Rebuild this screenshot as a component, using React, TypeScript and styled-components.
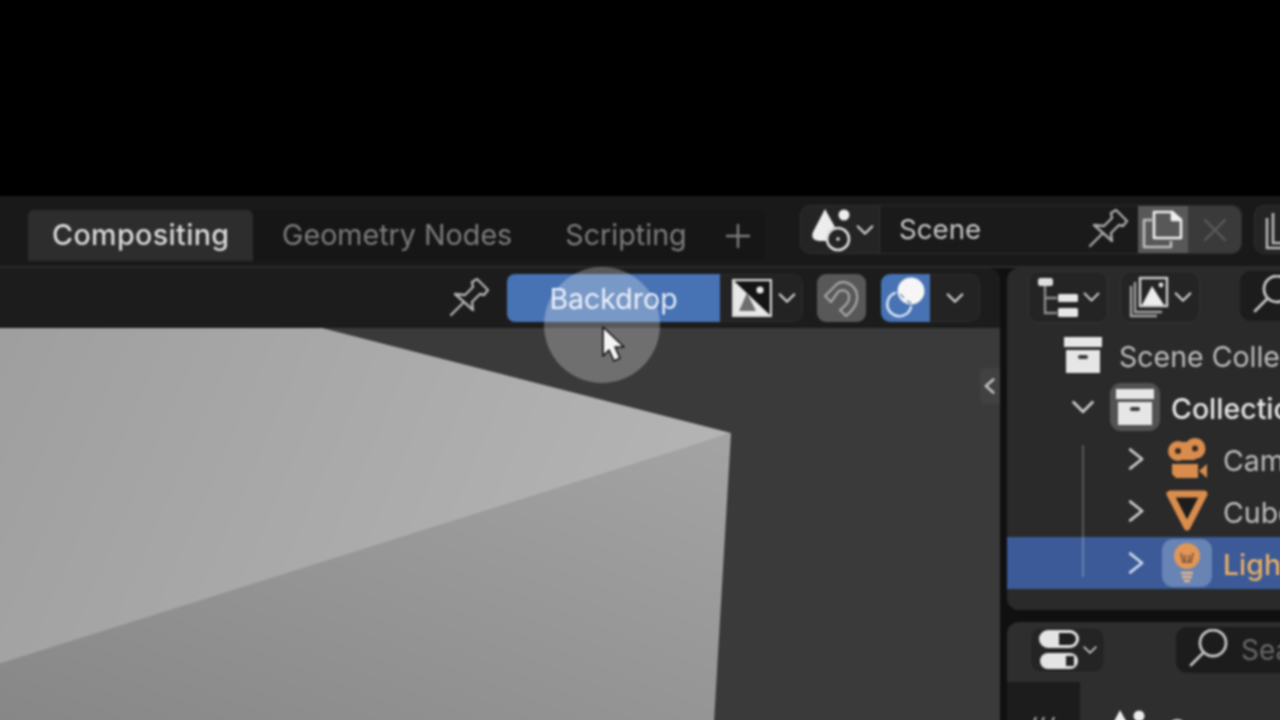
import React from 'react'
import styled, { createGlobalStyle } from 'styled-components'

const GlobalStyle = createGlobalStyle`
  html, body {
    margin: 0;
    padding: 0;
    background: #000;
  }
  * {
    box-sizing: border-box;
  }
`

const Frame = styled.div`
  width: 1280px;
  height: 720px;
  overflow: hidden;
  background: #000;
`

// 2px bigger on every side so the soft video blur does not fade at the frame edges
const Screen = styled.div`
  position: relative;
  width: 1284px;
  height: 724px;
  margin: -2px;
  padding-top: 198px;
  display: flex;
  flex-direction: column;
  overflow: hidden;
  background: #000;
  font-family: Inter, 'Liberation Sans', sans-serif;
  font-size: 28.7px;
  white-space: nowrap;
  filter: blur(0.8px);
`

const TopBar = styled.header`
  height: 72px;
  flex-shrink: 0;
  display: flex;
  align-items: flex-start;
  padding: 9px 0 0 30px;
  background: #191919;
  border-bottom: 2px solid #2b2b2b;
`

const TabStrip = styled.nav`
  width: 737px;
  height: 51px;
  margin-top: 5px;
  flex-shrink: 0;
  display: flex;
  gap: 5px;
  background: #161616;
  border-radius: 6px 6px 0 0;
`

const Tab = styled.div<{ $active?: boolean }>`
  width: ${props => (props.$active ? '225px' : 'auto')};
  height: 100%;
  padding: 0 24px 2px;
  display: flex;
  align-items: center;
  border-radius: 6px 6px 0 0;
  background: ${props => (props.$active ? '#2d2d2d' : 'transparent')};
  color: ${props => (props.$active ? '#d8d8d8' : '#7c7c7c')};
  font-weight: ${props => (props.$active ? 500 : 400)};
  letter-spacing: ${props => (props.$active ? '0.35px' : '0')};
`

const PlusButton = styled.div`
  width: 44px;
  display: flex;
  align-items: center;
  justify-content: center;
`

const SceneGroup = styled.div<{ $width: number; $gap: number }>`
  width: ${props => props.$width}px;
  height: 49px;
  margin-left: ${props => props.$gap}px;
  flex-shrink: 0;
  display: flex;
  overflow: hidden;
  border: 1px solid #2e2e2e;
  border-radius: 10px;
  background: #242424;
`

const SceneIconSlot = styled.div`
  width: 79px;
  flex-shrink: 0;
  display: flex;
  align-items: center;
  padding-left: 10px;
  border-right: 1px solid #333;
`

const SceneField = styled.div`
  flex: 1;
  display: flex;
  align-items: center;
  justify-content: space-between;
  padding: 0 9px 2px 19px;
  background: #1a1a1a;
  color: #c6c6c6;
  font-size: 27.7px;
`

const SceneAction = styled.div<{ $bg: string }>`
  width: ${props => (props.$bg === '#585858' ? 50 : 53)}px;
  flex-shrink: 0;
  display: flex;
  align-items: center;
  justify-content: center;
  background: ${props => props.$bg};
`

const Workspace = styled.div`
  flex: 1;
  min-height: 0;
  display: flex;
  gap: 7px;
  background: #101010;
`

const NodeEditor = styled.section`
  width: 1002px;
  flex-shrink: 0;
  display: flex;
  flex-direction: column;
  overflow: hidden;
  border-top-right-radius: 12px;
`

const EditorHeader = styled.div`
  height: 60px;
  flex-shrink: 0;
  display: flex;
  align-items: center;
  justify-content: flex-end;
  padding-right: 20px;
  background: #1c1c1c;
`

const PinSlot = styled.div`
  margin-right: 17px;
  display: flex;
`

const BackdropToggle = styled.div`
  width: 213px;
  height: 48px;
  display: flex;
  align-items: center;
  justify-content: center;
  border-radius: 8px 0 0 8px;
  background: #4772b3;
  color: #e4ecf7;
  font-size: 28.5px;
`

const DropdownButton = styled.div<{ $width: number; $flat?: boolean }>`
  width: ${props => props.$width}px;
  height: 48px;
  display: flex;
  align-items: center;
  gap: 5px;
  padding-left: ${props => (props.$flat ? 15 : 12)}px;
  border: 1px solid #2c2c2c;
  border-left: none;
  border-radius: 0 10px 10px 0;
  background: #232323;
`

const SnapButton = styled.div`
  width: 49px;
  height: 48px;
  margin-left: 14px;
  margin-right: 15px;
  display: flex;
  border-radius: 9px;
  background: #585858;
`

const OverlayButton = styled.div`
  width: 49px;
  height: 48px;
  display: flex;
  border-radius: 9px 0 0 9px;
  background: #4772b3;
`

const Viewport = styled.div`
  position: relative;
  flex: 1;
  background: #3a3a3a;
`

const CubeCanvas = styled.svg`
  position: absolute;
  inset: 0;
  width: 100%;
  height: 100%;
`

const SidebarTab = styled.div`
  position: absolute;
  top: 40px;
  right: 0;
  width: 20px;
  height: 36px;
  display: flex;
  align-items: center;
  justify-content: center;
  background: #414141;
  border-radius: 5px 0 0 5px;
`

const SideColumn = styled.div`
  flex: 1;
  min-width: 0;
  display: flex;
  flex-direction: column;
  gap: 12px;
`

const OutlinerPanel = styled.section`
  position: relative;
  height: 342px;
  flex-shrink: 0;
  overflow: hidden;
  border-radius: 12px 0 0 12px;
  background: #2a2a2a;
`

const PanelHeader = styled.div<{ $height: number; $top: number }>`
  height: ${props => props.$height}px;
  padding-top: ${props => props.$top}px;
  display: flex;
  align-items: flex-start;
`

const HeaderDropdown = styled.div<{ $left: number; $height: number }>`
  width: ${props => (props.$height === 46 ? 75 : 80)}px;
  height: ${props => props.$height}px;
  margin-left: ${props => props.$left}px;
  flex-shrink: 0;
  display: flex;
  align-items: center;
  justify-content: flex-end;
  gap: 3px;
  padding-right: 6px;
  border: 1px solid #333;
  border-radius: 11px;
  background: #242424;
`

const IconPush = styled.div`
  margin-right: auto;
  padding-left: 8px;
  display: flex;
`

const SearchBox = styled.div<{ $left: number; $height: number }>`
  width: 200px;
  height: ${props => props.$height}px;
  margin-left: ${props => props.$left}px;
  flex-shrink: 0;
  display: flex;
  align-items: center;
  gap: 11px;
  padding-left: 12px;
  border-radius: 11px 0 0 11px;
  background: #1c1c1c;
  color: #686868;
  font-size: 28px;
`

const TreeList = styled.div`
  padding-top: 1px;
`

const TreeRow = styled.div<{ $depth: number; $selected?: boolean }>`
  height: 52px;
  padding-left: ${props => 50 + props.$depth * 52}px;
  display: flex;
  align-items: center;
  background: ${props => (props.$selected ? '#3b5a97' : 'transparent')};
`

const ExpandSlot = styled.div`
  width: 52px;
  flex-shrink: 0;
  display: flex;
  justify-content: center;
`

const IconSlot = styled.div<{ $highlight?: string }>`
  width: 50px;
  height: 48px;
  margin: 0 1px;
  flex-shrink: 0;
  display: flex;
  align-items: center;
  justify-content: center;
  border-radius: 11px;
  background: ${props => props.$highlight || 'transparent'};
`

const TreeLabel = styled.span<{ $color: string; $strong?: boolean }>`
  margin-left: 10px;
  padding-top: 3px;
  color: ${props => props.$color};
  font-weight: ${props => (props.$strong ? 500 : 400)};
  font-size: 28.5px;
`

const TreeGuide = styled.div`
  position: absolute;
  top: 177px;
  left: 75px;
  width: 2px;
  height: 132px;
  background: rgba(255, 255, 255, 0.22);
`

const PropertiesPanel = styled.section`
  flex: 1;
  min-height: 0;
  overflow: hidden;
  border-radius: 12px 0 0 0;
  background: #2e2e2e;
`

const PropertiesBody = styled.div`
  display: flex;
  height: 100px;
`

const PropertyTabs = styled.div`
  width: 73px;
  flex-shrink: 0;
  display: flex;
  justify-content: center;
  padding-top: 34px;
  background: #1c1c1c;
`

const PropertyTitle = styled.div`
  display: flex;
  align-items: flex-start;
  gap: 18px;
  padding: 26px 0 0 26px;
  color: #c4c4c4;
  font-size: 28.5px;
`

const PropertyName = styled.span`
  margin-top: 4px;
`

const ClickHalo = styled.div`
  position: absolute;
  top: 269px;
  left: 546px;
  width: 116px;
  height: 116px;
  border-radius: 50%;
  background: rgba(255, 255, 255, 0.27);
`

const Cursor = styled.svg`
  position: absolute;
  top: 328px;
  left: 604px;
`

const Chevron = ({
  dir = 'down',
  color = '#c8c8c8',
  size = 22,
  weight = 2.4,
}: {
  dir?: 'down' | 'right' | 'left'
  color?: string
  size?: number
  weight?: number
}) => {
  const points = dir === 'down' ? '3,7 11,15 19,7' : dir === 'right' ? '7,3 17,11 7,19' : '15,3 6,11 15,19'
  return (
    <svg width={size} height={size} viewBox="0 0 22 22" fill="none">
      <polyline points={points} stroke={color} strokeWidth={weight} strokeLinecap="round" strokeLinejoin="round" />
    </svg>
  )
}

const PinIcon = ({ color = '#b0b0b0' }: { color?: string }) => (
  <svg width="40" height="40" viewBox="0 0 40 40" fill="none" stroke={color} strokeWidth="2.4" strokeLinejoin="round" strokeLinecap="round">
    <path d="M5 16 L15 17 L23 9 L22 4 L27 1 L38 12 L34 17 L30 16 L22 24 L23 32 Z" />
    <path d="M13 25 L1 37" />
  </svg>
)

const PlusIcon = () => (
  <svg width="26" height="26" viewBox="0 0 26 26" stroke="#7c7c7c" strokeWidth="2.4" strokeLinecap="round">
    <path d="M13 2 V24 M2 13 H24" />
  </svg>
)

const SceneIcon = () => (
  <svg width="44" height="46" viewBox="0 0 44 46" fill="none">
    <path d="M14 2 L2 25 Q-1 33 8 34 L16 34 Q14 24 24 20 Z" fill="#ededed" />
    <circle cx="33" cy="8" r="5.5" fill="#ededed" />
    <circle cx="27" cy="32" r="11" stroke="#dedede" strokeWidth="2.6" />
    <circle cx="27" cy="32" r="1.8" fill="#dedede" />
  </svg>
)

const DuplicateIcon = () => (
  <svg width="44" height="42" viewBox="0 0 44 42" fill="none" strokeWidth="2.6" strokeLinejoin="round">
    <path d="M13 3 H31 L40 11 V29 H13 Z" stroke="#efefef" fill="#585858" />
    <path d="M31 3 V11 H40 Z" fill="#efefef" stroke="#efefef" />
    <path d="M11 11 H3 V38 H30 V32" stroke="#bdbdbd" />
  </svg>
)

const CloseIcon = () => (
  <svg width="26" height="26" viewBox="0 0 26 26" stroke="#5a5a5a" strokeWidth="2.4" strokeLinecap="round">
    <path d="M3 3 L23 23 M23 3 L3 23" />
  </svg>
)

const StackBackIcon = () => (
  <svg width="34" height="40" viewBox="0 0 34 40" fill="none" stroke="#b8b8b8" strokeWidth="2.6">
    <path d="M2 8 V38 H26 M8 3 V33 H30" />
  </svg>
)

const BackdropImageIcon = () => (
  <svg width="40" height="38" viewBox="0 0 40 38">
    <rect x="1" y="1" width="38" height="36" fill="#141414" />
    <path d="M1 1 L39 37 H1 Z" fill="#e8e8e8" />
    <path d="M7 32 L15 14 L24 32 Z" fill="#6e6e6e" />
    <circle cx="28" cy="11" r="3.6" fill="#e8e8e8" />
    <rect x="1" y="1" width="38" height="36" fill="none" stroke="#d8d8d8" strokeWidth="2.4" />
  </svg>
)

const MagnetIcon = () => (
  <svg width="49" height="48" viewBox="0 0 49 48" fill="none" stroke="#a2a2a2" strokeWidth="2.4" strokeLinejoin="round">
    <path d="M8 22 L20 10 C30 4 42 14 40 26 C39 32 34 38 29 42 L23 36 C28 32 33 28 32 22 C31 16 25 15 21 18 L14 28 Z" />
  </svg>
)

const OverlayIcon = () => (
  <svg width="49" height="48" viewBox="0 0 49 48" fill="none">
    <path d="M14 19 A12 12 0 1 0 30 33" stroke="#d6e2f4" strokeWidth="2.6" strokeLinecap="round" />
    <circle cx="30" cy="17" r="13.5" fill="#f6f6f6" />
    <path d="M19 20 L23 24 M26 27 L30 29" stroke="#6a85ad" strokeWidth="1.4" />
  </svg>
)

const OutlinerModeIcon = () => (
  <svg width="42" height="42" viewBox="0 0 42 42" fill="none">
    <rect x="1" y="2" width="15" height="8" rx="2.5" fill="#dedede" />
    <path d="M8 10 V37 H20 M8 22 H20" stroke="#8e8e8e" strokeWidth="2.4" />
    <rect x="21" y="18" width="20" height="8" rx="1.5" fill="#e6e6e6" />
    <rect x="21" y="32" width="20" height="9" rx="1.5" fill="#e6e6e6" />
  </svg>
)

const DisplayModeIcon = () => (
  <svg width="40" height="42" viewBox="0 0 40 42" fill="none">
    <path d="M2 10 V40 H28 M6 6 V36 H33" stroke="#a2a2a2" strokeWidth="2.4" />
    <rect x="11" y="2" width="27" height="28" fill="#242424" stroke="#d0d0d0" strokeWidth="2.4" />
    <path d="M13 29 L23 10 L35 29 Z" fill="#ededed" />
    <circle cx="32" cy="9" r="2.4" fill="#dedede" />
  </svg>
)

const SearchIcon = () => (
  <svg width="42" height="42" viewBox="0 0 42 42" fill="none" stroke="#c4c4c4" strokeWidth="2.8" strokeLinecap="round">
    <circle cx="25" cy="14" r="13" />
    <path d="M15 24 L3 36" />
  </svg>
)

const TogglesIcon = () => (
  <svg width="40" height="40" viewBox="0 0 40 40" fill="none">
    <rect x="1.5" y="1.5" width="37" height="15" rx="7.5" fill="#1f1f1f" stroke="#e4e4e4" strokeWidth="3" />
    <path d="M9 1 H20 V17 H9 A8 8 0 0 1 9 1 Z" fill="#e4e4e4" />
    <rect x="1" y="23" width="38" height="16" rx="8" fill="#e4e4e4" />
    <rect x="27" y="26" width="8" height="10" fill="#242424" />
  </svg>
)

const BoxIcon = () => (
  <svg width="40" height="38" viewBox="0 0 40 38">
    <rect x="1" y="1" width="38" height="10" fill="#e6e6e6" />
    <rect x="3" y="14" width="34" height="23" fill="#e6e6e6" />
    <rect x="15" y="19" width="10" height="4" rx="2" fill="#3a3a3a" />
  </svg>
)

const CameraIcon = () => (
  <svg width="44" height="42" viewBox="0 0 44 42">
    <path d="M13 4 H30 V22 H13 Z" fill="#d98c4c" />
    <circle cx="13" cy="13" r="10" fill="#d98c4c" />
    <circle cx="30" cy="10.5" r="10.5" fill="#d98c4c" />
    <circle cx="13" cy="13" r="3" fill="#3a2a1e" />
    <circle cx="30" cy="10.5" r="3" fill="#3a2a1e" />
    <path d="M7 26 H33 V40 H11 L7 36 Z" fill="#d98c4c" />
    <path d="M34 33 L42 26 V40 Z" fill="#d98c4c" />
  </svg>
)

const CubeIcon = () => (
  <svg width="44" height="42" viewBox="0 0 44 42" fill="none">
    <path d="M5 4 H39 L22 37 Z" stroke="#d98c4c" strokeWidth="7" strokeLinejoin="round" fill="#1c1c1c" />
  </svg>
)

const BulbIcon = () => (
  <svg width="32" height="44" viewBox="0 0 32 44" fill="none">
    <circle cx="16" cy="15" r="13" fill="#e09656" />
    <path d="M10 12 L12 21 H20 L22 12 M14 14 V21 M18 14 V21" stroke="#8a5e3e" strokeWidth="2" />
    <path d="M10 32 H22 M11 36 H21 M13 40 H19" stroke="#e3b68e" strokeWidth="2.4" />
  </svg>
)

const ToolHint = () => (
  <svg width="24" height="6" viewBox="0 0 24 6" stroke="#b4b4b4" strokeWidth="2">
    <path d="M2 6 L4 1 M10 6 L12 1 M20 6 L22 1" />
  </svg>
)

const App = () => {
  return (
    <Frame>
      <GlobalStyle />
      <Screen>
        <TopBar>
          <TabStrip>
            <Tab $active>Compositing</Tab>
            <Tab>Geometry Nodes</Tab>
            <Tab>Scripting</Tab>
            <PlusButton>
              <PlusIcon />
            </PlusButton>
          </TabStrip>
          <SceneGroup $width={442} $gap={35}>
            <SceneIconSlot>
              <SceneIcon />
              <Chevron size={20} />
            </SceneIconSlot>
            <SceneField>
              Scene
              <PinIcon color="#a8a8a8" />
            </SceneField>
            <SceneAction $bg="#585858">
              <DuplicateIcon />
            </SceneAction>
            <SceneAction $bg="#3a3a3a">
              <CloseIcon />
            </SceneAction>
          </SceneGroup>
          <SceneGroup $width={120} $gap={12}>
            <SceneIconSlot>
              <StackBackIcon />
            </SceneIconSlot>
          </SceneGroup>
        </TopBar>
        <Workspace>
          <NodeEditor>
            <EditorHeader>
              <PinSlot>
                <PinIcon />
              </PinSlot>
              <BackdropToggle>Backdrop</BackdropToggle>
              <DropdownButton $width={83}>
                <BackdropImageIcon />
                <Chevron size={20} />
              </DropdownButton>
              <SnapButton>
                <MagnetIcon />
              </SnapButton>
              <OverlayButton>
                <OverlayIcon />
              </OverlayButton>
              <DropdownButton $width={50} $flat>
                <Chevron size={20} />
              </DropdownButton>
            </EditorHeader>
            <Viewport>
              <CubeCanvas viewBox="-2 0 1002 394" preserveAspectRatio="none">
                <defs>
                  <linearGradient id="cubeTop" x1="0" y1="0" x2="1" y2="0.2">
                    <stop offset="0" stopColor="#9f9f9f" />
                    <stop offset="1" stopColor="#b4b4b4" />
                  </linearGradient>
                  <linearGradient id="cubeFront" x1="0" y1="1" x2="1" y2="0">
                    <stop offset="0" stopColor="#878787" />
                    <stop offset="1" stopColor="#a4a4a4" />
                  </linearGradient>
                </defs>
                <polygon points="-2,320 731,105 714,394 -2,394" fill="url(#cubeFront)" />
                <polygon points="-2,0 322,0 731,105 -2,336" fill="url(#cubeTop)" />
              </CubeCanvas>
              <SidebarTab>
                <Chevron dir="left" size={18} color="#bdbdbd" weight={3.4} />
              </SidebarTab>
            </Viewport>
          </NodeEditor>
          <SideColumn>
            <OutlinerPanel>
              <PanelHeader $height={60} $top={3}>
                <HeaderDropdown $left={21} $height={52}>
                  <IconPush>
                    <OutlinerModeIcon />
                  </IconPush>
                  <Chevron size={20} />
                </HeaderDropdown>
                <HeaderDropdown $left={12} $height={52}>
                  <IconPush>
                    <DisplayModeIcon />
                  </IconPush>
                  <Chevron size={20} />
                </HeaderDropdown>
                <SearchBox $left={40} $height={50}>
                  <SearchIcon />
                </SearchBox>
              </PanelHeader>
              <TreeList>
                <TreeRow $depth={0}>
                  <ExpandSlot>
                    <BoxIcon />
                  </ExpandSlot>
                  <TreeLabel $color="#bdbdbd">Scene Collection</TreeLabel>
                </TreeRow>
                <TreeRow $depth={0}>
                  <ExpandSlot>
                    <Chevron size={26} />
                  </ExpandSlot>
                  <IconSlot $highlight="#525252">
                    <BoxIcon />
                  </IconSlot>
                  <TreeLabel $color="#e6e6e6" $strong>
                    Collection
                  </TreeLabel>
                </TreeRow>
                <TreeRow $depth={1}>
                  <ExpandSlot>
                    <Chevron dir="right" size={26} />
                  </ExpandSlot>
                  <IconSlot>
                    <CameraIcon />
                  </IconSlot>
                  <TreeLabel $color="#bdbdbd">Camera</TreeLabel>
                </TreeRow>
                <TreeRow $depth={1}>
                  <ExpandSlot>
                    <Chevron dir="right" size={26} />
                  </ExpandSlot>
                  <IconSlot>
                    <CubeIcon />
                  </IconSlot>
                  <TreeLabel $color="#bdbdbd">Cube</TreeLabel>
                </TreeRow>
                <TreeRow $depth={1} $selected>
                  <ExpandSlot>
                    <Chevron dir="right" size={26} color="#c9d5ec" />
                  </ExpandSlot>
                  <IconSlot $highlight="#6784b4">
                    <BulbIcon />
                  </IconSlot>
                  <TreeLabel $color="#e8ad62" $strong>
                    Light
                  </TreeLabel>
                </TreeRow>
              </TreeList>
              <TreeGuide />
            </OutlinerPanel>
            <PropertiesPanel>
              <PanelHeader $height={60} $top={5}>
                <HeaderDropdown $left={23} $height={46}>
                  <IconPush>
                    <TogglesIcon />
                  </IconPush>
                  <Chevron size={20} />
                </HeaderDropdown>
                <SearchBox $left={71} $height={46}>
                  <SearchIcon />
                  Search
                </SearchBox>
              </PanelHeader>
              <PropertiesBody>
                <PropertyTabs>
                  <ToolHint />
                </PropertyTabs>
                <PropertyTitle>
                  <SceneIcon />
                  <PropertyName>Scene</PropertyName>
                </PropertyTitle>
              </PropertiesBody>
            </PropertiesPanel>
          </SideColumn>
        </Workspace>
        <ClickHalo />
        <Cursor width="26" height="38" viewBox="0 0 26 38">
          <path d="M1 1 L1 30 L7 24 L12 35 L18 32 L13 21 L22 21 Z" fill="#f4f4f4" stroke="#111" strokeWidth="1.6" strokeLinejoin="round" />
        </Cursor>
      </Screen>
    </Frame>
  )
}

export default App
